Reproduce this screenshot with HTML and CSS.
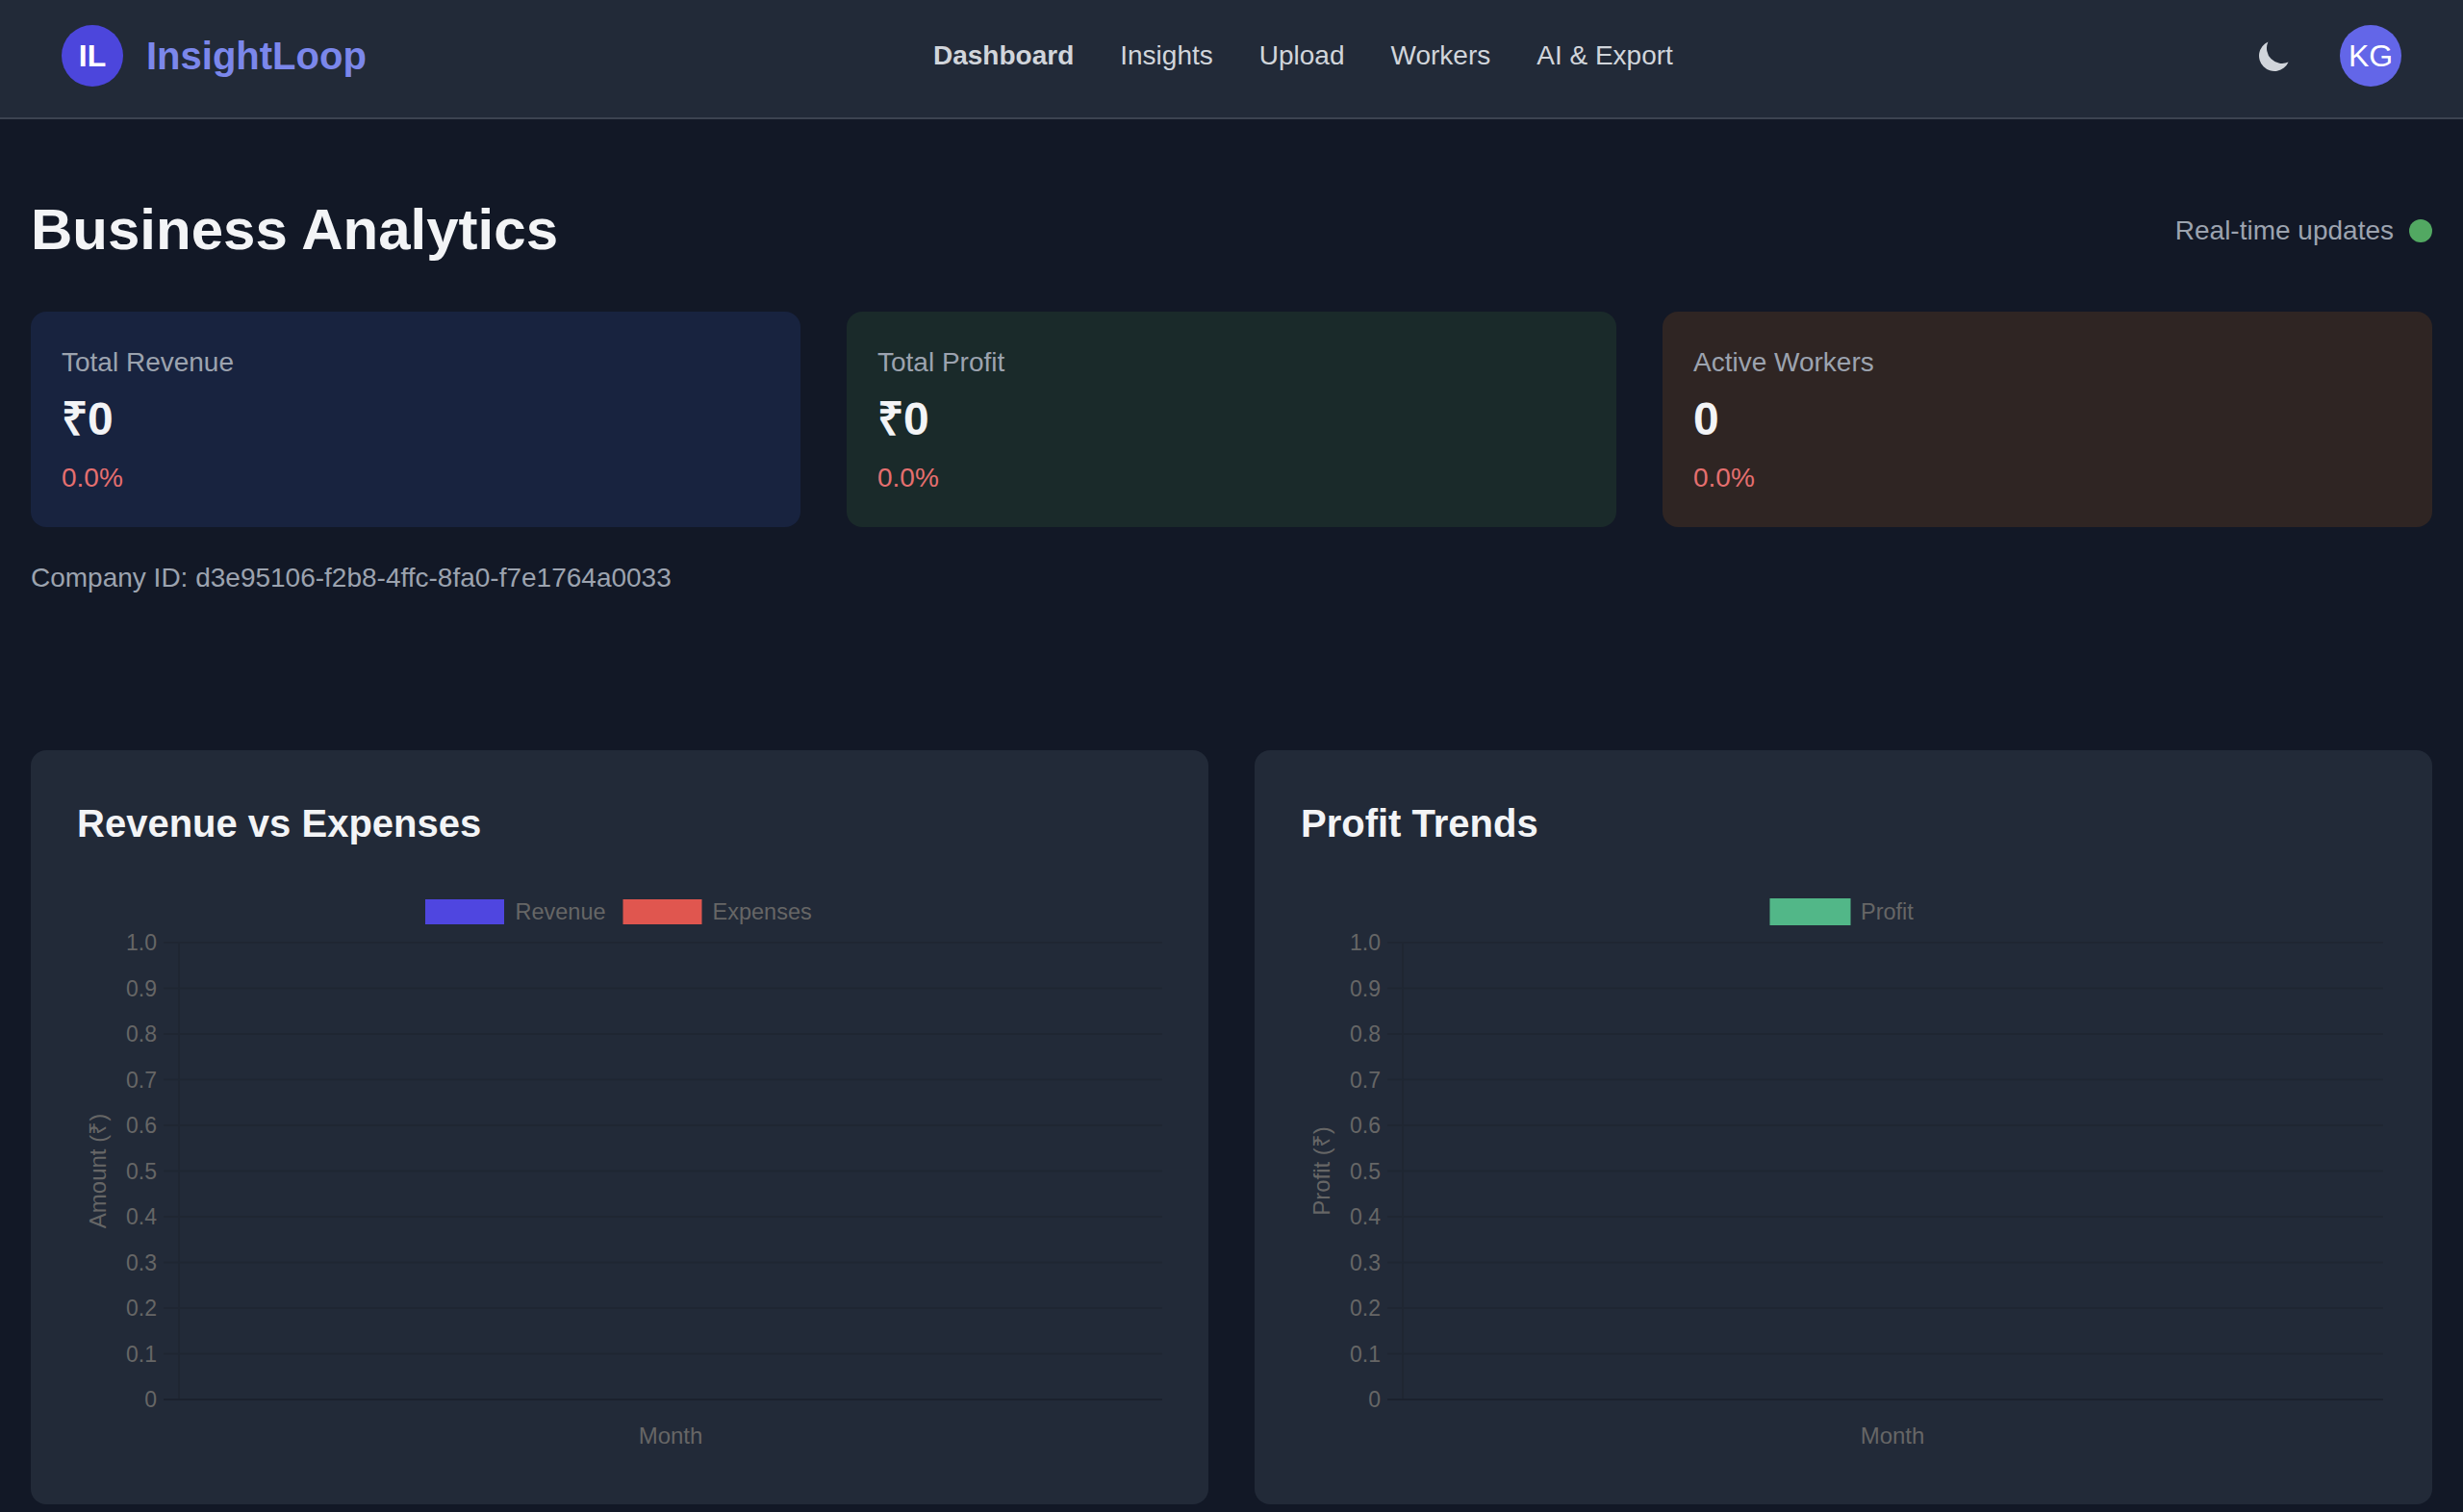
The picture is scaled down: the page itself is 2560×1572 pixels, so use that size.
FILE: index.html
```html
<!DOCTYPE html>
<html lang="en">
<head>
    <meta charset="UTF-8">
    <meta name="viewport" content="width=device-width, initial-scale=1.0">
    <title>InsightLoop</title>
    <link rel="stylesheet" href="styles.css">
</head>
<body>
    <nav class="navbar">
        <div class="brand">
            <div class="brand-mark">IL</div>
            <span class="brand-name">InsightLoop</span>
        </div>
        <div class="nav-links">
            <a class="nav-link active" href="#">Dashboard</a>
            <a class="nav-link" href="#">Insights</a>
            <a class="nav-link" href="#">Upload</a>
            <a class="nav-link" href="#">Workers</a>
            <a class="nav-link" href="#">AI &amp; Export</a>
        </div>
        <div class="nav-right">
            <button class="theme-btn" type="button" aria-label="Toggle theme">
                <svg class="theme-icon" viewBox="0 0 20 20"><path d="M17.293 13.293A8 8 0 016.707 2.707a8.001 8.001 0 1010.586 10.586z"/></svg>
            </button>
            <div class="avatar">KG</div>
        </div>
    </nav>

    <main class="content">
        <div class="page-head">
            <h1 class="page-title">Business Analytics</h1>
            <div class="live">
                <span>Real-time updates</span>
                <span class="live-dot"></span>
            </div>
        </div>

        <section class="stats">
            <div class="stat stat-blue">
                <div class="stat-label">Total Revenue</div>
                <div class="stat-value">₹0</div>
                <div class="stat-change">0.0%</div>
            </div>
            <div class="stat stat-green">
                <div class="stat-label">Total Profit</div>
                <div class="stat-value">₹0</div>
                <div class="stat-change">0.0%</div>
            </div>
            <div class="stat stat-brown">
                <div class="stat-label">Active Workers</div>
                <div class="stat-value">0</div>
                <div class="stat-change">0.0%</div>
            </div>
        </section>

        <p class="company-id">Company ID: d3e95106-f2b8-4ffc-8fa0-f7e1764a0033</p>

        <section class="charts">
            <div class="chart-card">
                <h2 class="chart-title">Revenue vs Expenses</h2>
                <svg class="chart" viewBox="0 0 1128 604">
                    <rect class="swatch-revenue" x="362" y="23" width="82" height="26"/>
                    <text class="chart-text legend-text" x="455.5" y="44">Revenue</text>
                    <rect class="swatch-expenses" x="567.5" y="23" width="82" height="26"/>
                    <text class="chart-text legend-text" x="660.5" y="44">Expenses</text>

                    <line class="grid-line" x1="106" y1="68" x2="106" y2="543"/>
                    <line class="grid-line" x1="90" y1="68" x2="1128" y2="68"/>
                    <line class="grid-line" x1="90" y1="115.5" x2="1128" y2="115.5"/>
                    <line class="grid-line" x1="90" y1="163" x2="1128" y2="163"/>
                    <line class="grid-line" x1="90" y1="210.5" x2="1128" y2="210.5"/>
                    <line class="grid-line" x1="90" y1="258" x2="1128" y2="258"/>
                    <line class="grid-line" x1="90" y1="305.5" x2="1128" y2="305.5"/>
                    <line class="grid-line" x1="90" y1="353" x2="1128" y2="353"/>
                    <line class="grid-line" x1="90" y1="400.5" x2="1128" y2="400.5"/>
                    <line class="grid-line" x1="90" y1="448" x2="1128" y2="448"/>
                    <line class="grid-line" x1="90" y1="495.5" x2="1128" y2="495.5"/>
                    <line class="zero-line" x1="90" y1="543" x2="1128" y2="543"/>

                    <text class="chart-text tick" x="83" y="76">1.0</text>
                    <text class="chart-text tick" x="83" y="123.5">0.9</text>
                    <text class="chart-text tick" x="83" y="171">0.8</text>
                    <text class="chart-text tick" x="83" y="218.5">0.7</text>
                    <text class="chart-text tick" x="83" y="266">0.6</text>
                    <text class="chart-text tick" x="83" y="313.5">0.5</text>
                    <text class="chart-text tick" x="83" y="361">0.4</text>
                    <text class="chart-text tick" x="83" y="408.5">0.3</text>
                    <text class="chart-text tick" x="83" y="456">0.2</text>
                    <text class="chart-text tick" x="83" y="503.5">0.1</text>
                    <text class="chart-text tick" x="83" y="551">0</text>

                    <text class="chart-text axis-title" transform="translate(30 305.5) rotate(-90)">Amount (₹)</text>
                    <text class="chart-text axis-title" x="617" y="589">Month</text>
                </svg>
            </div>

            <div class="chart-card">
                <h2 class="chart-title">Profit Trends</h2>
                <svg class="chart" viewBox="0 0 1128 604">
                    <rect class="swatch-profit" x="487.5" y="22" width="84" height="28"/>
                    <text class="chart-text legend-text" x="582" y="44">Profit</text>

                    <line class="grid-line" x1="106" y1="68" x2="106" y2="543"/>
                    <line class="grid-line" x1="90" y1="68" x2="1125" y2="68"/>
                    <line class="grid-line" x1="90" y1="115.5" x2="1125" y2="115.5"/>
                    <line class="grid-line" x1="90" y1="163" x2="1125" y2="163"/>
                    <line class="grid-line" x1="90" y1="210.5" x2="1125" y2="210.5"/>
                    <line class="grid-line" x1="90" y1="258" x2="1125" y2="258"/>
                    <line class="grid-line" x1="90" y1="305.5" x2="1125" y2="305.5"/>
                    <line class="grid-line" x1="90" y1="353" x2="1125" y2="353"/>
                    <line class="grid-line" x1="90" y1="400.5" x2="1125" y2="400.5"/>
                    <line class="grid-line" x1="90" y1="448" x2="1125" y2="448"/>
                    <line class="grid-line" x1="90" y1="495.5" x2="1125" y2="495.5"/>
                    <line class="zero-line" x1="90" y1="543" x2="1125" y2="543"/>

                    <text class="chart-text tick" x="83" y="76">1.0</text>
                    <text class="chart-text tick" x="83" y="123.5">0.9</text>
                    <text class="chart-text tick" x="83" y="171">0.8</text>
                    <text class="chart-text tick" x="83" y="218.5">0.7</text>
                    <text class="chart-text tick" x="83" y="266">0.6</text>
                    <text class="chart-text tick" x="83" y="313.5">0.5</text>
                    <text class="chart-text tick" x="83" y="361">0.4</text>
                    <text class="chart-text tick" x="83" y="408.5">0.3</text>
                    <text class="chart-text tick" x="83" y="456">0.2</text>
                    <text class="chart-text tick" x="83" y="503.5">0.1</text>
                    <text class="chart-text tick" x="83" y="551">0</text>

                    <text class="chart-text axis-title" transform="translate(30 305.5) rotate(-90)">Profit (₹)</text>
                    <text class="chart-text axis-title" x="615" y="589">Month</text>
                </svg>
            </div>
        </section>
    </main>
</body>
</html>
```

FILE: styles.css
```css
* {
    box-sizing: border-box;
}
body {
    margin: 0;
    font-family: "Liberation Sans", Arial, sans-serif;
    background-color: #121826;
    color: #f3f4f6;
}
.navbar {
    display: flex;
    justify-content: space-between;
    align-items: center;
    height: 124px;
    padding: 0 64px 6px;
    background-color: #222a38;
    border-bottom: 2px solid #3c4350;
}
.brand {
    display: flex;
    align-items: center;
    gap: 24px;
}
.brand-mark {
    display: flex;
    justify-content: center;
    align-items: center;
    width: 64px;
    height: 64px;
    border-radius: 50%;
    background-color: #4c46dc;
    color: #fff;
    font-size: 32px;
    font-weight: bold;
}
.brand-name {
    color: #7b87eb;
    font-size: 40px;
    font-weight: bold;
}
.nav-links {
    display: flex;
    gap: 48px;
}
.nav-link {
    color: #d1d5db;
    font-size: 28px;
    text-decoration: none;
}
.nav-link.active {
    font-weight: bold;
}
.nav-right {
    display: flex;
    align-items: center;
    gap: 32px;
}
.theme-btn {
    display: block;
    padding: 16px;
    border: none;
    background: none;
}
.theme-icon {
    display: block;
    width: 40px;
    height: 40px;
    fill: #d1d5db;
}
.avatar {
    display: flex;
    justify-content: center;
    align-items: center;
    width: 64px;
    height: 64px;
    border-radius: 50%;
    background-color: #6366e8;
    color: #fff;
    font-size: 32px;
}
.content {
    padding: 80px 32px 8px;
}
.page-head {
    display: flex;
    justify-content: space-between;
    align-items: center;
    height: 72px;
    margin-bottom: 48px;
}
.page-title {
    margin: 0 0 2px;
    font-size: 60px;
    line-height: 70px;
}
.live {
    display: flex;
    align-items: center;
    gap: 16px;
    color: #9ca3af;
    font-size: 28px;
}
.live-dot {
    width: 24px;
    height: 24px;
    border-radius: 50%;
    background-color: #52a862;
}
.stats {
    display: grid;
    grid-template-columns: repeat(3, 1fr);
    gap: 48px;
}
.stat {
    height: 224px;
    padding: 33px 32px 0;
    border-radius: 16px;
}
.stat-blue {
    background-color: #18233f;
}
.stat-green {
    background-color: #1a2a2a;
}
.stat-brown {
    background-color: #2f2523;
}
.stat-label {
    color: #9ca3af;
    font-size: 28px;
    line-height: 40px;
}
.stat-value {
    margin-top: 3px;
    font-size: 48px;
    font-weight: bold;
    line-height: 72px;
}
.stat-change {
    margin-top: 5px;
    color: #e56f6f;
    font-size: 28px;
    line-height: 40px;
}
.company-id {
    margin: 33px 0 159px;
    color: #9ca3af;
    font-size: 28px;
    line-height: 40px;
}
.charts {
    display: grid;
    grid-template-columns: repeat(2, 1fr);
    gap: 48px;
}
.chart-card {
    height: 784px;
    padding: 48px;
    border-radius: 16px;
    background-color: #222a38;
}
.chart-title {
    margin: 0 0 28px;
    font-size: 40px;
    line-height: 56px;
}
.chart {
    display: block;
    width: 1128px;
    height: 604px;
}
.chart-text {
    fill: #666;
    font-size: 23px;
}
.legend-text {
    font-size: 23.5px;
}
.tick {
    text-anchor: end;
}
.axis-title {
    font-size: 24px;
    text-anchor: middle;
}
.grid-line {
    stroke: #1f2632;
    stroke-width: 2;
}
.zero-line {
    stroke: #1b212d;
    stroke-width: 2;
}
.swatch-revenue {
    fill: #4f46e0;
}
.swatch-expenses {
    fill: #e0564f;
}
.swatch-profit {
    fill: #52b788;
}
```
